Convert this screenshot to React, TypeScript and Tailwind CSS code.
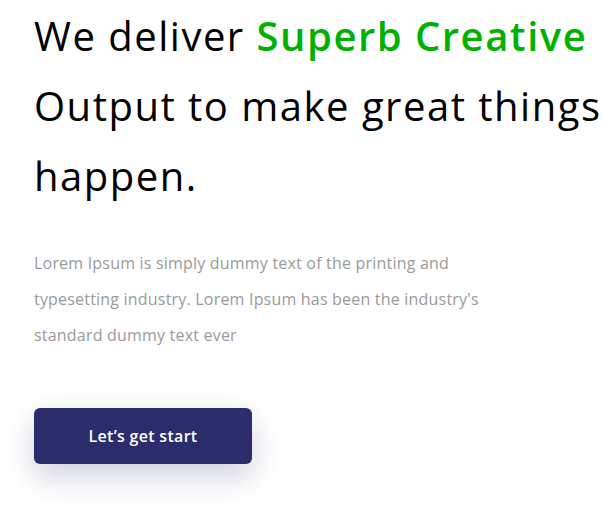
import React from 'react';

export default function App() {
  return (
    <div className="min-h-[507px] w-full overflow-hidden bg-white">
      <section className="pl-[34px] pt-[1px]" style={{ fontFamily: '"Open Sans", "Liberation Sans", sans-serif' }}>
        <h1 className="whitespace-nowrap text-[40px] font-normal leading-[70px] tracking-[1.5px] text-black">
          We deliver <span className="font-semibold text-[#00b200]">Superb Creative</span>
          <br />
          Output to make great things
          <br />
          happen.
        </h1>

        <p className="mt-[34px] max-w-[470px] text-[16px] leading-[36px] tracking-[0.2px] text-[#9a9a9a]">
          Lorem Ipsum is simply dummy text of the printing and typesetting industry. Lorem Ipsum has been the industry's standard dummy text ever
        </p>

        <button className="mt-[55px] flex h-[56px] w-[218px] items-center justify-center rounded-[6px] bg-[#2a2c6b] text-[16px] font-semibold tracking-[0.3px] text-white shadow-[0_12px_30px_rgba(42,44,107,0.22)]">
          Let’s get start
        </button>
      </section>
    </div>
  );
}
